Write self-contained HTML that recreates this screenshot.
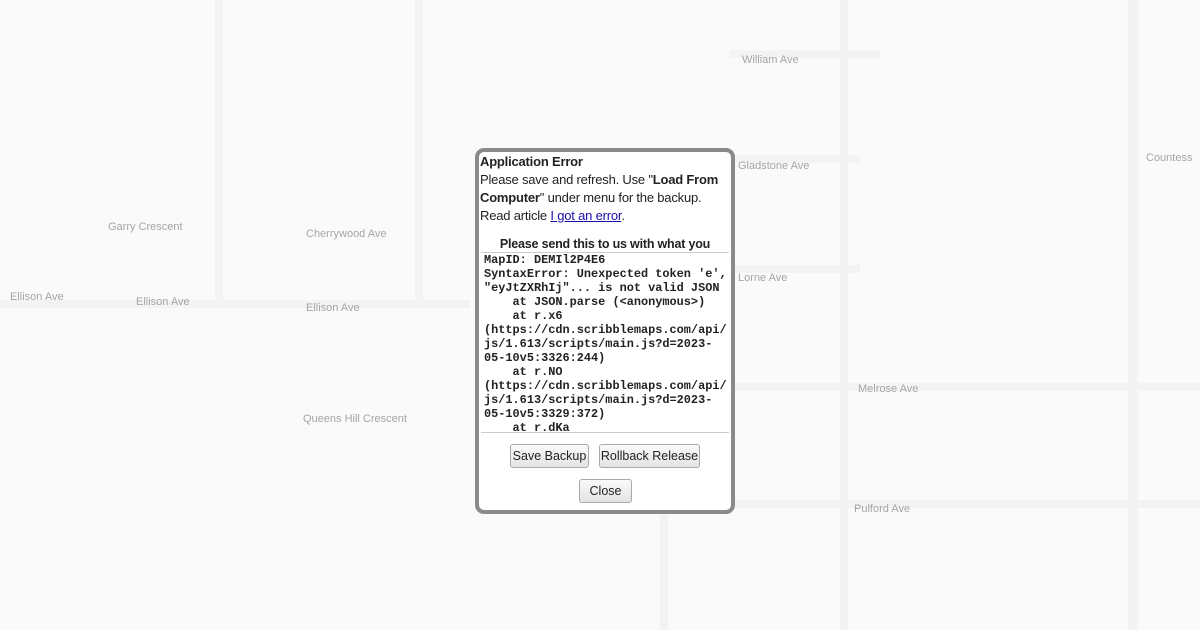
<!DOCTYPE html>
<html><head><style>
body{margin:0;width:1200px;height:630px;overflow:hidden;background:#fafafa;font-family:"Liberation Sans",sans-serif;position:relative}
.l{position:absolute;color:#a5a5a5;font-size:11px;white-space:nowrap}
.r{position:absolute;background:#f3f3f3}
#d{position:absolute;left:475px;top:148px;width:252px;height:358px;border:4px solid #8a8a8a;border-radius:9px;background:#fff;font-size:13px;color:#222}
#t{position:absolute;left:1px;top:1px;width:250px;line-height:18px;letter-spacing:-0.2px}
#h{position:absolute;left:0;top:85px;width:252px;text-align:center;font-weight:bold;font-size:12.5px;letter-spacing:-0.2px}
#p{position:absolute;left:2px;top:100px;width:248px;height:181px;border-top:1px solid #ccc;border-bottom:1px solid #ccc;overflow:hidden;font-family:"Liberation Mono",monospace;font-weight:bold;font-size:11.9px;line-height:14px;white-space:pre;margin:0;padding:0 0 0 3px;box-sizing:border-box}
.b{position:absolute;height:22px;border:1px solid #aaa;border-radius:3px;background:linear-gradient(#fafafa,#e3e3e3);font-size:12.5px;line-height:22px;text-align:center;color:#222}
a{color:#1a0dab}
</style></head><body>
<div class="r" style="left:0;top:300px;width:470px;height:8px"></div>
<div class="r" style="left:730px;top:383px;width:470px;height:8px"></div>
<div class="r" style="left:730px;top:500px;width:470px;height:8px"></div>
<div class="r" style="left:730px;top:265px;width:130px;height:8px"></div>
<div class="r" style="left:730px;top:155px;width:130px;height:8px"></div>
<div class="r" style="left:730px;top:50px;width:150px;height:8px"></div>
<div class="r" style="left:1128px;top:0;width:10px;height:630px"></div>
<div class="r" style="left:840px;top:0;width:8px;height:630px"></div>
<div class="r" style="left:660px;top:510px;width:8px;height:120px"></div>
<div class="r" style="left:415px;top:0;width:8px;height:300px"></div>
<div class="r" style="left:215px;top:0;width:8px;height:300px"></div>
<span class="l" style="left:742px;top:54px">William Ave</span>
<span class="l" style="left:738px;top:160px">Gladstone Ave</span>
<span class="l" style="left:738px;top:272px">Lorne Ave</span>
<span class="l" style="left:858px;top:383px">Melrose Ave</span>
<span class="l" style="left:854px;top:503px">Pulford Ave</span>
<span class="l" style="left:1146px;top:152px">Countess</span>
<span class="l" style="left:10px;top:291px">Ellison Ave</span>
<span class="l" style="left:136px;top:296px">Ellison Ave</span>
<span class="l" style="left:306px;top:302px">Ellison Ave</span>
<span class="l" style="left:108px;top:221px">Garry Crescent</span>
<span class="l" style="left:306px;top:228px">Cherrywood Ave</span>
<span class="l" style="left:303px;top:413px">Queens Hill Crescent</span>
<div id="d">
<div id="t"><b>Application Error</b><br>Please save and refresh. Use "<b>Load From Computer</b>" under menu for the backup. Read article <a href="#">I got an error</a>.</div>
<div id="h">Please send this to us with what you</div>
<pre id="p">MapID: DEMIl2P4E6
SyntaxError: Unexpected token 'e',
"eyJtZXRhIj"... is not valid JSON
    at JSON.parse (&lt;anonymous&gt;)
    at r.x6
(https://cdn.scribblemaps.com/api/
js/1.613/scripts/main.js?d=2023-
05-10v5:3326:244)
    at r.NO
(https://cdn.scribblemaps.com/api/
js/1.613/scripts/main.js?d=2023-
05-10v5:3329:372)
    at r.dKa</pre>
<div class="b" style="left:31px;top:292px;width:77px">Save Backup</div>
<div class="b" style="left:120px;top:292px;width:99px">Rollback Release</div>
<div class="b" style="left:100px;top:327px;width:51px">Close</div>
</div>
</body></html>
